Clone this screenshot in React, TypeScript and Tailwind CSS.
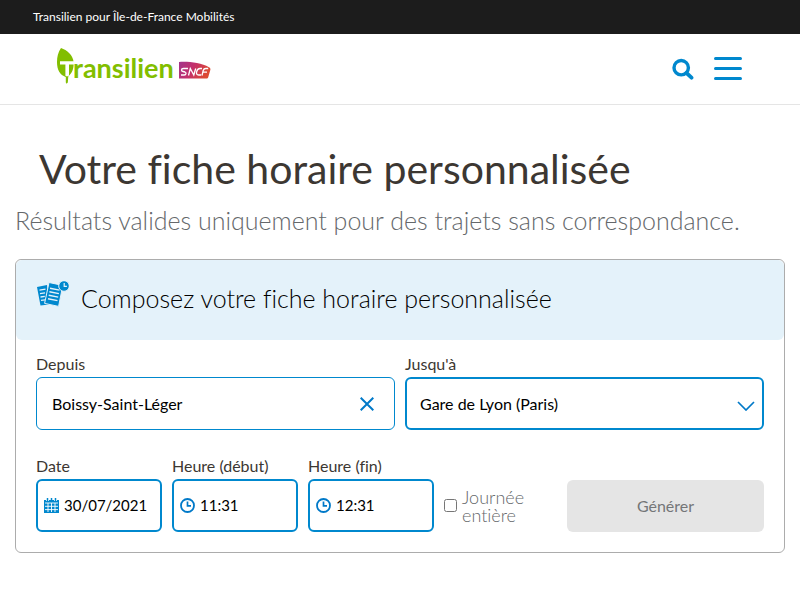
import React, { useState } from "react";

function Logo() {
  return (
    <svg viewBox="0 0 156 38" className="h-[38px] w-[156px]" role="img" aria-label="Transilien SNCF">
      <defs>
        <linearGradient id="sncf" x1="0" y1="0" x2="1" y2="0.3">
          <stop offset="0" stopColor="#a1358c" />
          <stop offset="0.5" stopColor="#c4306b" />
          <stop offset="1" stopColor="#dc4a33" />
        </linearGradient>
      </defs>
      <path d="M5 1C11 3 17 8 17.600 15c.4 6-1.200 11-5.300 14.500l-.5 6-1.200 1.200-.8-1.200V30C4 28 1 23 1 15 1 10 2 5 5 1z" fill="#82be00" />
      <path d="M4 14.200h14v3.200h-5V28.500c-1 1-2.600 1.200-3.600.3V17.400H4z" fill="#fff" />
      <text x="17" y="31" fontSize="27" fontWeight="700" fill="#82be00" fontFamily="Lato, sans-serif">
        ransilien
      </text>
      <path d="M123 15c10-.6 22 .8 30 5.200 1.300.7 1.700 1.400 1.300 2.800l-2 7c-.3 1.200-.9 1.500-2 1.500H123z" fill="url(#sncf)" />
      <path
        d="M132 21.500h-4.500c-1.300 0-2 .6-2 1.500s.6 1.300 1.500 1.500l2 .5c1.600.5 1.300 3-.8 3H125M132.500 28.500l1.800-7 3.500 6.500 1.900-6.500M146 21.500h-2c-2 0-3 1.500-3.400 3.300-.4 2 .3 3.200 2 3.200h2.500M146 28.500l1.200-5c.4-1.400 1.200-2 2.500-2h2.500M147 25.200h4"
        fill="none"
        stroke="#fff"
        strokeWidth="1.300"
      />
    </svg>
  );
}

function SearchIcon() {
  return (
    <svg viewBox="0 0 22 22" className="size-[22px]" fill="none" stroke="#0088ce" aria-hidden="true">
      <circle cx="9.200" cy="9.700" r="7.200" strokeWidth="3.400" />
      <path d="M14.500 15l5 4.700" strokeWidth="3.800" strokeLinecap="round" />
    </svg>
  );
}

function MenuIcon() {
  return (
    <svg viewBox="0 0 28 24" className="h-6 w-7" stroke="#0088ce" strokeWidth="3" strokeLinecap="round" aria-hidden="true">
      <path d="M1.500 1.500h25M1.500 11.500h25M1.500 21.500h25" />
    </svg>
  );
}

function SheetsIcon() {
  return (
    <svg viewBox="0 0 32 26" className="h-[26px] w-8 shrink-0" aria-hidden="true">
      <path d="M0 6l10-2 2 19.500-8.500 1z" fill="#0088ce" />
      <path d="M2.500 9.200l6-1M3 12.600l5-.8M3.500 16l4.300-.7M4 19.400l4-.6" stroke="#e4f2fa" strokeWidth="1.300" />
      <path d="M12 1.500l13.800 2.900-4.200 21-14-3z" fill="#0088ce" stroke="#e4f2fa" strokeWidth="1" />
      <path d="M13 7.200l9.500 1.900M12.400 10.700l9.500 1.900M11.700 14.200l9.500 1.900M11 17.700l9.500 1.900" stroke="#e4f2fa" strokeWidth="1.400" />
      <circle cx="27" cy="5" r="5.300" fill="#0088ce" stroke="#e4f2fa" strokeWidth="1" />
      <path d="M27.200 2v3.400h2.700" fill="none" stroke="#e4f2fa" strokeWidth="1.200" />
    </svg>
  );
}

function CalendarIcon() {
  return (
    <svg viewBox="0 0 15 15" className="size-[15px] shrink-0" aria-hidden="true">
      <path d="M0 2h15v13H0z" fill="#0088ce" />
      <path d="M1 5h13M1 8.300h13M1 11.600h13M4 5v9M7.500 5v9M11 5v9" stroke="#fff" strokeWidth=".9" />
      <path d="M2 0h3v3H2zM10 0h3v3h-3z" fill="#fff" />
      <path d="M3.500 0v3M11.500 0v3M7.500 0v2" stroke="#0088ce" strokeWidth="1.500" />
    </svg>
  );
}

function ClockIcon() {
  return (
    <svg viewBox="0 0 15 15" className="size-[15px] shrink-0" fill="none" stroke="#0079c8" aria-hidden="true">
      <circle cx="7.500" cy="7.500" r="6.500" strokeWidth="1.800" />
      <path d="M7.500 3.500v4.300h3.500" strokeWidth="1.700" />
    </svg>
  );
}

type FieldProps = { id: string; label: string; icon: React.ReactNode; initial: string };

function IconField({ id, label, icon, initial }: FieldProps) {
  const [value, setValue] = useState(initial);
  return (
    <div className="min-w-0">
      <label htmlFor={id} className="block pb-[2px] text-base leading-[22px] text-[#3c3732]">
        {label}
      </label>
      <div className="flex h-[53px] items-center gap-[5px] rounded-md border-2 border-[#0088ce] pl-[6px]">
        {icon}
        <input
          id={id}
          value={value}
          onChange={(e) => setValue(e.target.value)}
          className="min-w-0 flex-1 bg-transparent text-[15px] text-black outline-none"
        />
      </div>
    </div>
  );
}

export default function App() {
  const [from, setFrom] = useState("Boissy-Saint-Léger");
  return (
    <div className="bg-white font-['Lato',sans-serif] [font-variant-ligatures:none]">
      <div className="flex h-[34px] items-center bg-[#1c1c1c] px-[33px] text-xs text-white">
        Transilien pour Île-de-France Mobilités
      </div>
      <header className="flex h-[71px] items-center justify-between border-b border-[#e5e5e5] pr-[58px] pl-14">
        <a href="#" aria-label="Accueil" className="pb-[6px]">
          <Logo />
        </a>
        <div className="flex items-center gap-5">
          <button type="button" aria-label="Rechercher">
            <SearchIcon />
          </button>
          <button type="button" aria-label="Menu">
            <MenuIcon />
          </button>
        </div>
      </header>

      <main className="px-[15px] pt-10">
        <h1 className="pl-6 text-[41px] leading-[48px] text-[#3c3732]">Votre fiche horaire personnalisée</h1>
        <p className="mt-2 text-[25px] leading-[38px] font-light whitespace-nowrap text-[#65686b]">
          Résultats valides uniquement pour des trajets sans correspondance.
        </p>

        <section className="mt-5 rounded-md border border-[#acacac]">
          <div className="flex h-20 items-center gap-3 rounded-md bg-[#e4f2fa] pl-[21px]">
            <div className="pb-3">
              <SheetsIcon />
            </div>
            <h2 className="pb-[2px] text-[25px] font-light text-black">Composez votre fiche horaire personnalisée</h2>
          </div>
          <form className="px-5 pt-[13px] pb-5" onSubmit={(e) => e.preventDefault()}>
            <div className="grid grid-cols-2 gap-[10px]">
              <div>
                <label htmlFor="from" className="block pb-[2px] text-base leading-[22px] text-[#3c3732]">
                  Depuis
                </label>
                <div className="flex h-[53px] items-center rounded-md border border-[#0088ce] pr-5 pl-[15px]">
                  <input
                    id="from"
                    value={from}
                    onChange={(e) => setFrom(e.target.value)}
                    className="min-w-0 flex-1 bg-transparent text-base text-black outline-none"
                  />
                  <button type="button" aria-label="Effacer" onClick={() => setFrom("")}>
                    <svg viewBox="0 0 14 14" className="size-[14px]" stroke="#0079c8" strokeWidth="2" aria-hidden="true">
                      <path d="M.7.7l12.600 12.600M13.300.7L.7 13.300" />
                    </svg>
                  </button>
                </div>
              </div>
              <div>
                <label htmlFor="to" className="block pb-[2px] text-base leading-[22px] text-[#3c3732]">
                  Jusqu'à
                </label>
                <div className="relative">
                  <select
                    id="to"
                    className="block h-[53px] w-full appearance-none rounded-md border-2 border-[#0088ce] bg-white pr-10 pl-[13px] text-base text-black"
                  >
                    <option>Gare de Lyon (Paris)</option>
                  </select>
                  <svg
                    viewBox="0 0 18 10"
                    className="pointer-events-none absolute top-6 right-[9px] h-[10px] w-[18px]"
                    fill="none"
                    stroke="#0079c8"
                    strokeWidth="1.700"
                    aria-hidden="true"
                  >
                    <path d="M1 1l8 8 8-8" />
                  </svg>
                </div>
              </div>
            </div>

            <div className="mt-[25px] grid grid-cols-[126fr_126fr_126fr_113fr_197fr] items-end gap-[10px]">
              <IconField id="date" label="Date" icon={<CalendarIcon />} initial="30/07/2021" />
              <IconField id="start" label="Heure (début)" icon={<ClockIcon />} initial="11:31" />
              <IconField id="end" label="Heure (fin)" icon={<ClockIcon />} initial="12:31" />
              <div className="flex h-[53px] items-center gap-[5px]">
                <input id="all-day" type="checkbox" className="size-[13px] shrink-0" />
                <label htmlFor="all-day" className="text-lg leading-[18px] font-light text-[#65686b]">
                  Journée entière
                </label>
              </div>
              <button type="submit" disabled className="h-[52px] rounded-md bg-[#e5e5e5] text-base text-[#747678]">
                Générer
              </button>
            </div>
          </form>
        </section>
      </main>
    </div>
  );
}
